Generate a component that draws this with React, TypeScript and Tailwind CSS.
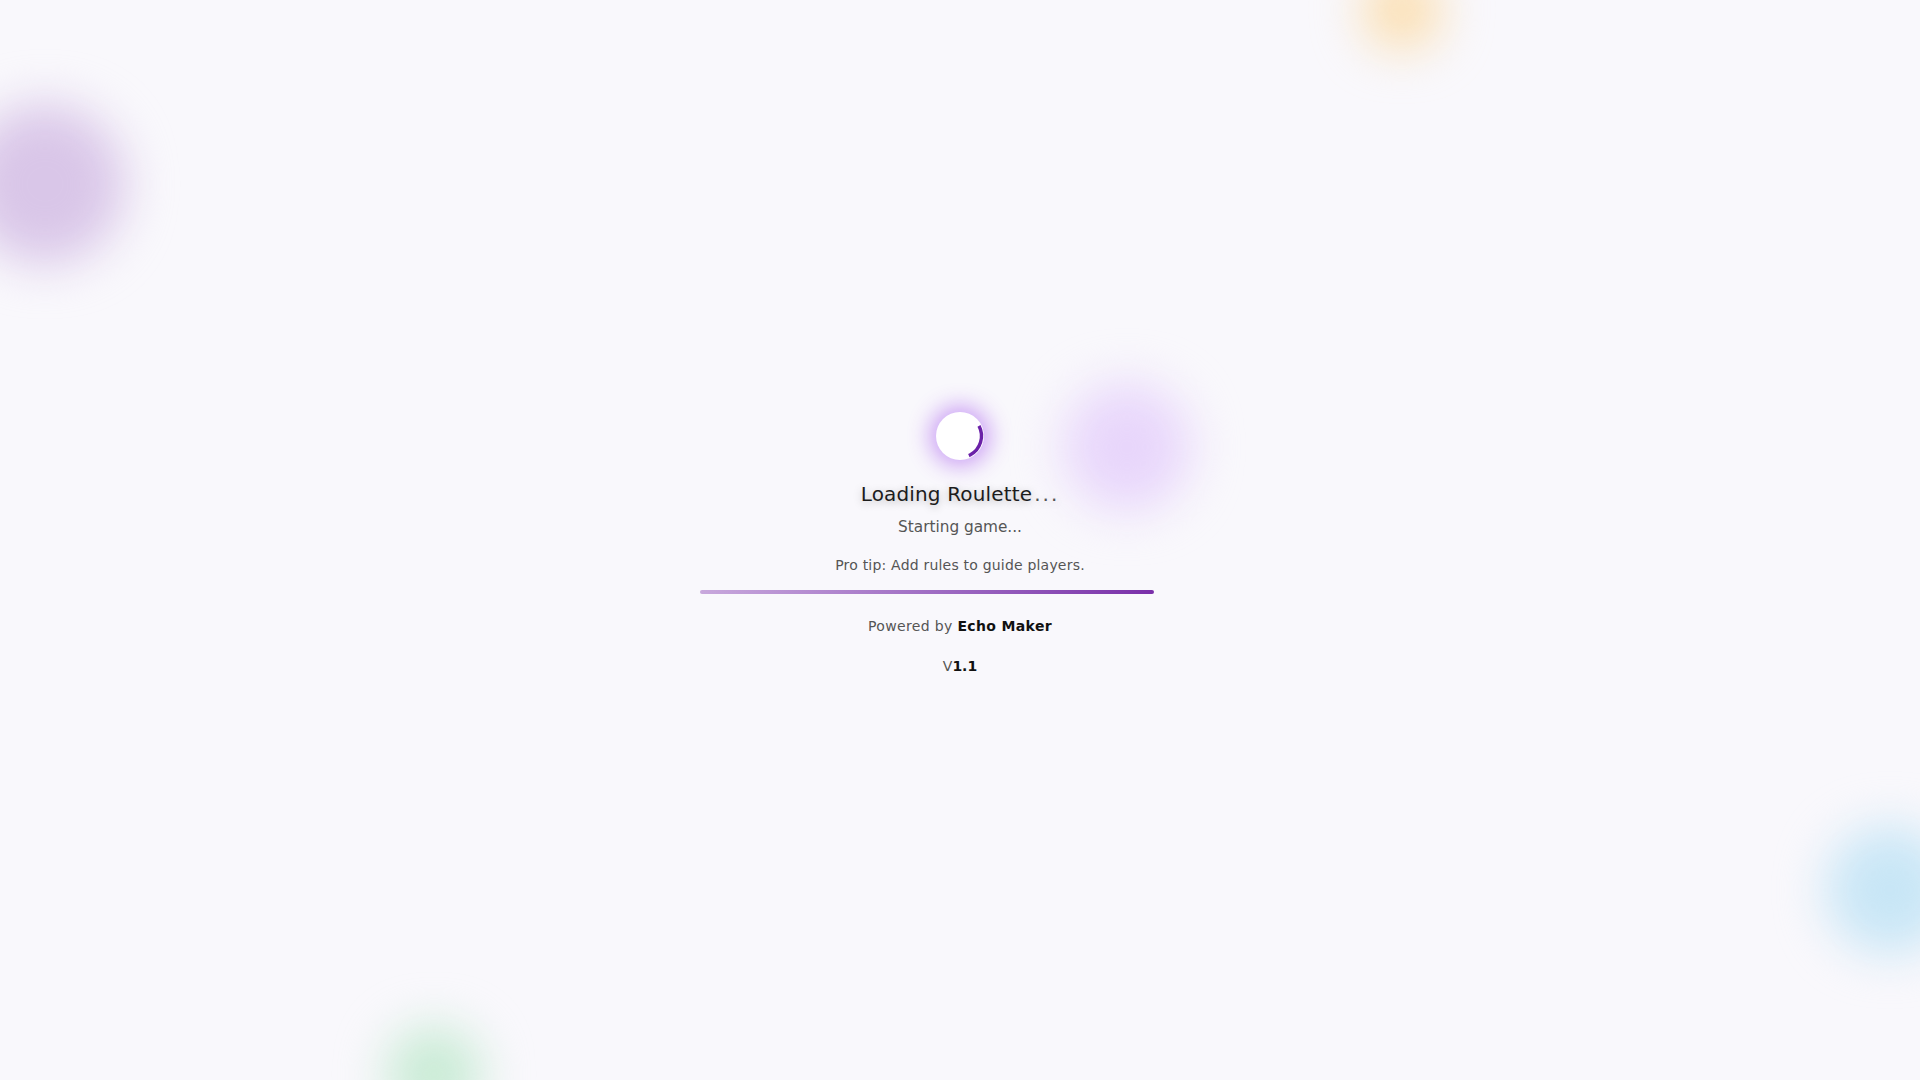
import { type ReactNode } from "react"

const Blob = ({ className }: { className: string }) => (
  <div className={`pointer-events-none absolute rounded-full ${className}`} />
)

const Spinner = () => (
  <div className="relative size-12 rounded-full bg-white shadow-[0_0_22px_6px_rgba(147,51,234,0.45)]">
    <svg viewBox="0 0 48 48" className="absolute inset-0 size-12 -rotate-[28deg]">
      <circle
        cx="24"
        cy="24"
        r="21.5"
        fill="none"
        stroke="#6b21a8"
        strokeWidth="3.4"
        strokeDasharray="35 200"
      />
    </svg>
  </div>
)

const Line = ({ children, className }: { children: ReactNode; className?: string }) => (
  <p className={`text-center ${className ?? ""}`}>{children}</p>
)

export default function App() {
  const progress = 87.3

  return (
    <main className="relative flex min-h-svh flex-col items-center justify-center overflow-hidden bg-[#f9f8fc] font-['DejaVu_Sans',sans-serif] text-[#1f1f1f]">
      {/* background glow blobs */}
      <Blob className="left-[-35px] top-[104px] size-40 bg-[#d9c6e8] blur-xl" />
      <Blob className="left-[1362px] top-[-30px] size-20 bg-[#fbdfb2] blur-xl" />
      <Blob className="left-[1063px] top-[383px] size-32 bg-[#e8d6fb] blur-xl" />
      <Blob className="left-[1826px] top-[826px] size-32 bg-[#c8e6f6] blur-xl" />
      <Blob className="left-[386px] top-[1026px] size-24 bg-[#c9ebd5] blur-xl" />

      <section className="relative z-10 flex flex-col items-center pt-2">
        <Spinner />
        <h1 className="mt-5 text-xl leading-7 tracking-[0.15px] text-[#1c1c1c] [text-shadow:0_2px_8px_rgba(0,0,0,0.28)]">
          Loading Roulette
          <span className="ml-0.5 tracking-widest text-[#555]">...</span>
        </h1>
        <Line className="mt-2 text-[15.3px] leading-[22px] text-[#555]">Starting game...</Line>
        <Line className="mt-[17px] text-sm leading-5 tracking-[0.2px] text-[#555]">
          Pro tip: Add rules to guide players.
        </Line>
        <div className="mt-[15px] h-1 w-[520px]">
          <div
            className="h-full rounded-full bg-linear-to-r from-[#c8a8dc] to-[#7a2fa9]"
            style={{ width: `${progress}%` }}
          />
        </div>
        <Line className="mt-[22px] text-sm leading-5 tracking-wide text-[#555]">
          Powered by <span className="font-bold text-[#111]">Echo Maker</span>
        </Line>
        <Line className="mt-5 text-sm leading-5 text-[#555]">
          V<span className="font-bold text-[#111]">1.1</span>
        </Line>
      </section>
    </main>
  )
}
